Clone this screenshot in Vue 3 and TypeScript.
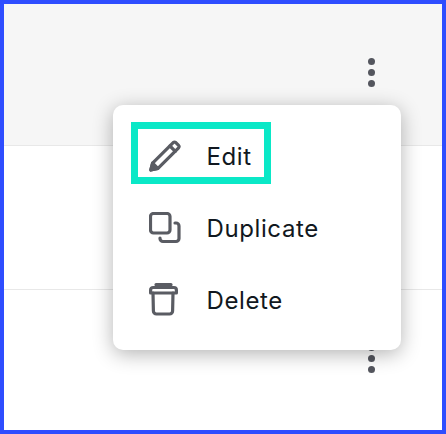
<script setup lang="ts">
const rows = [
  { id: 1, shaded: true },
  { id: 2, shaded: false },
  { id: 3, shaded: false },
]

const items = ['Edit', 'Duplicate', 'Delete']
</script>

<template>
  <div class="frame">
    <div v-for="row in rows" :key="row.id" class="row" :class="{ shaded: row.shaded }">
      <div class="dots">
        <span></span>
        <span></span>
        <span></span>
      </div>
    </div>

    <div class="menu">
      <div v-for="item in items" :key="item" class="item">
        <svg v-if="item === 'Edit'" class="icon" width="32" height="32" viewBox="0 0 32 32" fill="none">
          <path d="M1.8 30 L3.6 23.2 L24.2 2.6 Q25.5 1.6 26.8 2.6 L29.6 5.4 Q30.6 6.6 29.6 7.8 L9 28.4 Z" />
          <path d="M21 6 L26.3 11.3" />
          <path class="solid" d="M1.8 30 L3.6 23.2 L8.8 28.4 Z" />
        </svg>
        <svg v-else-if="item === 'Duplicate'" class="icon" width="32" height="32" viewBox="0 0 32 32" fill="none">
          <rect x="1.5" y="1.5" width="19.5" height="19.5" rx="3" />
          <path d="M26 11 H27 A3 3 0 0 1 30 14 V26.5 A3 3 0 0 1 27 29.5 H14 A3 3 0 0 1 11 26.5 V26" />
        </svg>
        <svg v-else class="icon" width="32" height="34" viewBox="0 0 32 34" fill="none">
          <path d="M1.6 10 V7 A2.5 2.5 0 0 1 4.1 4.5 H24.9 A2.5 2.5 0 0 1 27.4 7 V10 Z" />
          <path d="M7 1.7 H22" />
          <path d="M4 10 L4.4 28 A3 3 0 0 0 7.4 31 H20.6 A3 3 0 0 0 23.6 28 L24 10" />
        </svg>
        <span class="label">{{ item }}</span>
      </div>
      <div class="focus"></div>
    </div>
  </div>
</template>

<style scoped>
.frame {
  position: relative;
  box-sizing: border-box;
  width: 446px;
  height: 434px;
  border: 4px solid #2e4dff;
  background: #fff;
  overflow: hidden;
  font-family: Inter, "Liberation Sans", sans-serif;
}

.row {
  box-sizing: border-box;
  height: 144px;
  display: flex;
  justify-content: flex-end;
  padding-top: 54px;
  padding-right: 67px;
  border-bottom: 1px solid #e8e8e8;
}

.row.shaded {
  height: 142px;
  background: #f6f6f6;
}

.row:last-of-type {
  border-bottom: none;
  height: 141px;
  padding-top: 57px;
}

.dots {
  display: flex;
  flex-direction: column;
  gap: 4px;
}

.dots span {
  display: block;
  width: 7px;
  height: 7px;
  border-radius: 50%;
  background: #54565e;
}

.menu {
  position: absolute;
  left: 109px;
  top: 101px;
  box-sizing: border-box;
  width: 288px;
  height: 245px;
  padding: 15px 0 14px;
  background: #fff;
  border-radius: 10px;
  box-shadow: 0 4px 20px rgba(0, 0, 0, 0.3);
}

.item {
  display: flex;
  align-items: center;
  height: 72px;
  padding-left: 36px;
}

.icon {
  flex: none;
  width: 32px;
  margin-right: 25.5px;
  stroke: #5a5c63;
  stroke-width: 3.2;
  stroke-linejoin: round;
  stroke-linecap: round;
}

.solid {
  fill: #5a5c63;
}

.label {
  margin-top: 2px;
  font-size: 24px;
  line-height: 32px;
  letter-spacing: 0.6px;
  color: #111820;
}

.focus {
  position: absolute;
  left: 18px;
  top: 17px;
  box-sizing: border-box;
  width: 140px;
  height: 62px;
  border: 7px solid #0ae8c7;
}
</style>
